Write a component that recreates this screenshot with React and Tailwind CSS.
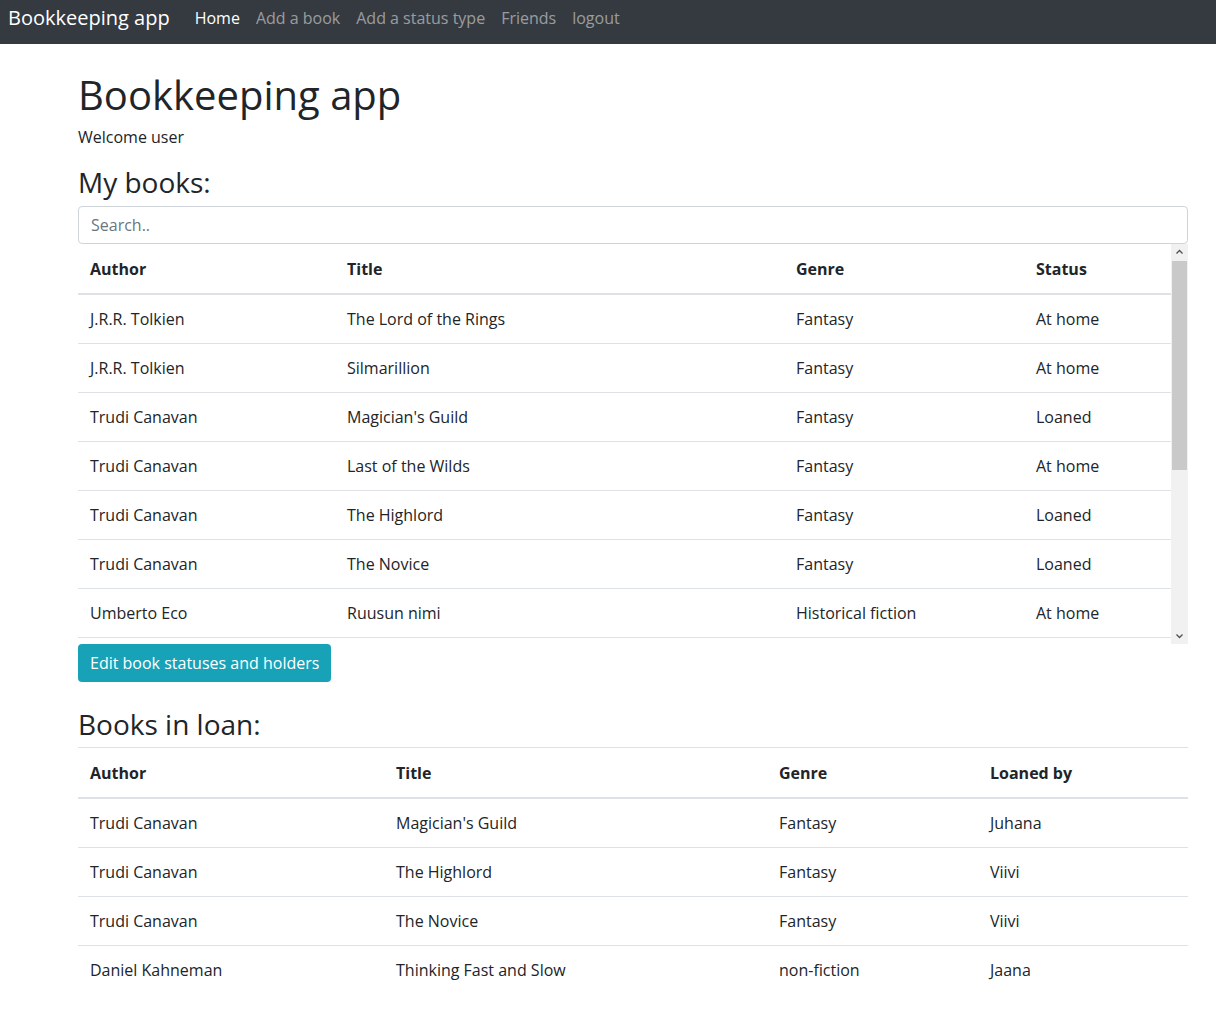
import React from "react";

const myBooks = [
  ["J.R.R. Tolkien", "The Lord of the Rings", "Fantasy", "At home"],
  ["J.R.R. Tolkien", "Silmarillion", "Fantasy", "At home"],
  ["Trudi Canavan", "Magician's Guild", "Fantasy", "Loaned"],
  ["Trudi Canavan", "Last of the Wilds", "Fantasy", "At home"],
  ["Trudi Canavan", "The Highlord", "Fantasy", "Loaned"],
  ["Trudi Canavan", "The Novice", "Fantasy", "Loaned"],
  ["Umberto Eco", "Ruusun nimi", "Historical fiction", "At home"],
];

const loaned = [
  ["Trudi Canavan", "Magician's Guild", "Fantasy", "Juhana"],
  ["Trudi Canavan", "The Highlord", "Fantasy", "Viivi"],
  ["Trudi Canavan", "The Novice", "Fantasy", "Viivi"],
  ["Daniel Kahneman", "Thinking Fast and Slow", "non-fiction", "Jaana"],
];

function Nav() {
  return (
    <nav className="h-[44px] bg-[#343a40] flex items-center pl-[8px] pb-[8px]">
      <span className="text-[20px] text-white mr-[17px]">Bookkeeping app</span>
      <a className="px-[8px] text-white">Home</a>
      <a className="px-[8px] text-white/50">Add a book</a>
      <a className="px-[8px] text-white/50">Add a status type</a>
      <a className="px-[8px] text-white/50">Friends</a>
      <a className="px-[8px] text-white/50">logout</a>
    </nav>
  );
}

function BookTable({ heads, rows, widths, topBorder, lastLine }) {
  return (
    <table className="w-full border-collapse table-fixed">
      <colgroup>
        {widths.map((w, i) => (
          <col key={i} className={w} />
        ))}
      </colgroup>
      <thead>
        <tr>
          {heads.map((h) => (
            <th
              key={h}
              className={
                "text-left font-bold px-[12px] pt-[13px] pb-[12px] leading-[24px] border-b-2 border-[#dee2e6] " +
                (topBorder ? "border-t border-t-[#dee2e6]" : "")
              }
            >
              {h}
            </th>
          ))}
        </tr>
      </thead>
      <tbody>
        {rows.map((r, i) => (
          <tr key={i}>
            {r.map((c, j) => (
              <td
                key={j}
                className={
                  "px-[12px] py-[12px] leading-[24px] border-t border-[#dee2e6] " +
                  (lastLine && i === rows.length - 1 ? "border-b border-b-[#dee2e6]" : "")
                }
              >
                {c}
              </td>
            ))}
          </tr>
        ))}
      </tbody>
    </table>
  );
}

function ScrollBar() {
  return (
    <div className="w-[17px] h-full bg-[#f1f1f1] flex flex-col items-center">
      <svg width="17" height="17" viewBox="0 0 17 17">
        <path d="M5.5 9.5 L8.5 6.5 L11.5 9.5" fill="none" stroke="#505050" strokeWidth="1.3" />
      </svg>
      <div className="w-[15px] h-[209px] bg-[#c9c9c9]" />
      <div className="flex-1" />
      <svg width="17" height="17" viewBox="0 0 17 17">
        <path d="M5.5 7.5 L8.5 10.5 L11.5 7.5" fill="none" stroke="#505050" strokeWidth="1.3" />
      </svg>
    </div>
  );
}

export default function App() {
  return (
    <div className="min-h-screen bg-white text-[#212529] text-[16px] leading-[24px] font-['Open_Sans',sans-serif]">
      <Nav />
      <div className="ml-[78px] w-[1110px] pt-[27px]">
        <h1 className="text-[40px] leading-[48px] font-normal mb-[6px]">Bookkeeping app</h1>
        <p className="mb-[16px]">Welcome user</p>
        <h3 className="text-[28px] leading-[34px] mb-[7px]">My books:</h3>
        <input
          className="block w-full h-[38px] border border-[#ced4da] rounded-[4px] px-[12px] placeholder:text-[#6c757d] outline-none"
          placeholder="Search.."
        />
        <div className="h-[400px] flex">
          <div className="flex-1 overflow-hidden">
            <BookTable
              heads={["Author", "Title", "Genre", "Status"]}
              rows={myBooks}
              widths={["w-[257px]", "w-[449px]", "w-[240px]", "w-[147px]"]}
              lastLine
            />
          </div>
          <ScrollBar />
        </div>
        <button className="h-[38px] px-[12px] rounded-[4px] bg-[#17a2b8] text-white">
          Edit book statuses and holders
        </button>
        <h3 className="text-[28px] leading-[34px] mt-[25px] mb-[6px]">Books in loan:</h3>
        <BookTable
          heads={["Author", "Title", "Genre", "Loaned by"]}
          rows={loaned}
          widths={["w-[306px]", "w-[383px]", "w-[211px]", "w-[210px]"]}
          topBorder
        />
      </div>
    </div>
  );
}
